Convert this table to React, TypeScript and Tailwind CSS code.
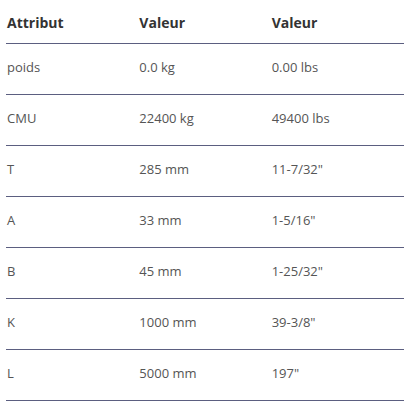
const rows = [
  ['poids', '0.0 kg', '0.00 lbs'],
  ['CMU', '22400 kg', '49400 lbs'],
  ['T', '285 mm', '11-7/32"'],
  ['A', '33 mm', '1-5/16"'],
  ['B', '45 mm', '1-25/32"'],
  ['K', '1000 mm', '39-3/8"'],
  ['L', '5000 mm', '197"'],
];

export default function App() {
  return (
    <div className="bg-white w-[411px] h-[415px] px-[6px] font-['Open_Sans',sans-serif]">
      <div className="w-[398px]">
        <div className="grid grid-cols-3 h-[44px] items-center border-b border-[#5b5e80] pl-[1px] pt-[2px]">
          <div className="font-bold text-[14px] text-[#333]">Attribut</div>
          <div className="font-bold text-[14px] text-[#333]">Valeur</div>
          <div className="font-bold text-[14px] text-[#333]">Valeur</div>
        </div>
        {rows.map((r) => (
          <div key={r[0]} className="grid grid-cols-3 h-[51px] items-center border-b border-[#5b5e80] pl-[1px] pb-[3px]">
            {r.map((c, i) => (
              <div key={i} className="text-[13px] text-[#555]">{c}</div>
            ))}
          </div>
        ))}
      </div>
    </div>
  );
}
